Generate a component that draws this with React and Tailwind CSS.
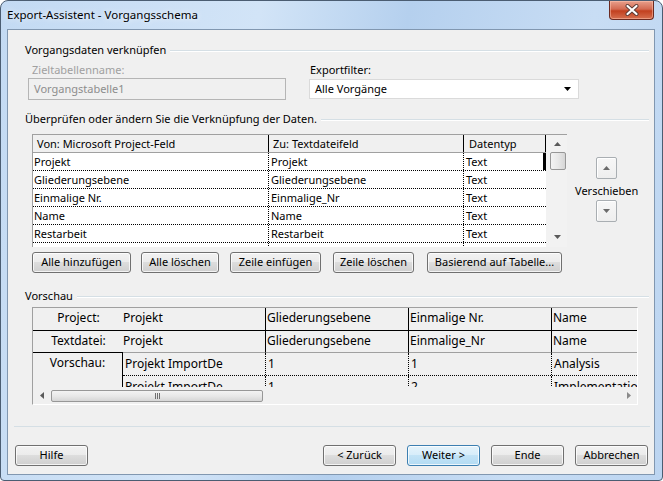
import clsx from "clsx";

const btnBase =
  "h-[21px] flex items-center justify-center rounded-[3px] border text-black shadow-[inset_0_0_0_1px_rgba(255,255,255,0.75)]";
const btnNormal =
  "border-[#707070] bg-[linear-gradient(#f2f2f2,#ebebeb_50%,#dddddd_50%,#cfcfcf)]";
const btnDefault =
  "border-[#3c7fb1] bg-[linear-gradient(#e5f3fb,#d6edfa_50%,#c2e3f6_50%,#b3dbf3)]";

const Btn = ({ className, def, children }) => (
  <div className={clsx(btnBase, def ? btnDefault : btnNormal, className)}>{children}</div>
);

const Heading = ({ children, className }) => (
  <div className={clsx("flex items-center h-[16px] pl-[17px] pr-[5px]", className)}>
    <span className="leading-[16px] whitespace-nowrap">{children}</span>
    <div className="flex-1 ml-[4px] mt-[2px] border-t border-[#d5dfe5] border-b border-b-white" />
  </div>
);

const TriUp = ({ color = "#5a5a5a" }) => (
  <svg width="7" height="4" viewBox="0 0 7 4">
    <path d="M0 4 L3.5 0 L7 4 Z" fill={color} />
  </svg>
);
const TriDown = ({ color = "#5a5a5a" }) => (
  <svg width="7" height="4" viewBox="0 0 7 4">
    <path d="M0 0 L7 0 L3.5 4 Z" fill={color} />
  </svg>
);
const TriLeft = () => (
  <svg width="4" height="7" viewBox="0 0 4 7">
    <path d="M4 0 L4 7 L0 3.5 Z" fill="#5a5a5a" />
  </svg>
);
const TriRight = () => (
  <svg width="4" height="7" viewBox="0 0 4 7">
    <path d="M0 0 L4 3.5 L0 7 Z" fill="#8a8a8a" />
  </svg>
);

const mapRows = [
  ["Projekt", "Projekt"],
  ["Gliederungsebene", "Gliederungsebene"],
  ["Einmalige Nr.", "Einmalige_Nr"],
  ["Name", "Name"],
  ["Restarbeit", "Restarbeit"],
  ["", ""],
];

const MappingGrid = () => (
  <div className="w-[535px] h-[113px] border-l border-t border-[#a0a0a0] bg-white flex overflow-hidden">
    <div className="w-[513px] flex flex-col">
      <div className="h-[18px] flex bg-[#f0f0f0] border-b border-[#a0a0a0] leading-[17px]">
        <div className="w-[236px] border-r border-black pl-[4px]">Von: Microsoft Project-Feld</div>
        <div className="w-[195px] border-r border-black pl-[4px]">Zu: Textdateifeld</div>
        <div className="w-[82px] border-r border-black pl-[5px]">Datentyp</div>
      </div>
      {mapRows.map((r, i) => (
        <div key={i} className="h-[18px] shrink-0 flex border-b border-dotted border-black leading-[17px]">
          <div className="w-[236px] border-r border-dotted border-black pl-[1px]">{r[0]}</div>
          <div className="w-[195px] border-r border-dotted border-black pl-[2px]">{r[1]}</div>
          <div className={clsx("w-[82px] pl-[2px]", i === 0 && "border-r-[3px] border-black")}>
            {r[0] ? "Text" : ""}
          </div>
        </div>
      ))}
    </div>
    <div className="w-[21px] bg-[#f2f2f2] flex flex-col items-center">
      <div className="h-[17px] flex items-center justify-center pl-[2px]">
        <TriUp />
      </div>
      <div className="w-[16px] h-[18px] ml-[3px] rounded-[2px] border border-[#979797] bg-[linear-gradient(to_right,#f3f3f3,#e8e8e8_50%,#d6d6d6)]" />
      <div className="flex-1" />
      <div className="h-[17px] flex items-start pt-[5px] justify-center pl-[2px]">
        <TriDown />
      </div>
    </div>
  </div>
);

const SmallBtn = ({ children }) => (
  <div className="w-[21px] h-[22px] rounded-[2px] border border-[#a9aeb2] bg-[linear-gradient(#f7f7f7,#eeeeee)] shadow-[inset_1px_1px_0_#ffffff] flex items-center justify-center">
    {children}
  </div>
);

const colW = "w-[143px] shrink-0 whitespace-nowrap overflow-hidden";

const Preview = () => (
  <div className="w-[606px] h-[98px] text-[12px] border-t border-l border-[#a0a0a0] border-r border-b border-r-white border-b-white bg-[#f0f0f0] flex flex-col overflow-hidden">
    <div className="h-[23px] flex border-b border-black leading-[20px] shrink-0">
      <div className="w-[90px] shrink-0 text-center pl-[1px]">Project:</div>
      <div className={clsx(colW, "border-r border-black")}>Projekt</div>
      <div className={clsx(colW, "border-r border-black pl-[1px]")}>Gliederungsebene</div>
      <div className={clsx(colW, "border-r border-black pl-[1px]")}>Einmalige Nr.</div>
      <div className="flex-1 whitespace-nowrap overflow-hidden pl-[1px]">Name</div>
    </div>
    <div className="h-[22px] flex leading-[20px] shrink-0">
      <div className="w-[90px] shrink-0 text-center border-b border-black pl-[1px]">Textdatei:</div>
      <div className={clsx(colW, "border-r border-black border-b border-b-[#a0a0a0]")}>Projekt</div>
      <div className={clsx(colW, "border-r border-black border-b border-b-[#a0a0a0] pl-[1px]")}>Gliederungsebene</div>
      <div className={clsx(colW, "border-r border-black border-b border-b-[#a0a0a0] pl-[1px]")}>Einmalige_Nr</div>
      <div className="flex-1 whitespace-nowrap overflow-hidden border-b border-[#a0a0a0] pl-[1px]">Name</div>
    </div>
    <div className="h-[34px] flex shrink-0 overflow-hidden">
      <div className="w-[90px] shrink-0 border-r border-black text-center pt-[1px] leading-[18px]">Vorschau:</div>
      <div className="flex-1 flex flex-col overflow-hidden">
        {[
          ["Projekt ImportDe", "1", "1", "Analysis"],
          ["Projekt ImportDe", "1", "2", "Implementation"],
        ].map((r, i) => (
          <div key={i} className="h-[23px] shrink-0 flex border-b border-dotted border-black leading-[22px]">
            <div className="w-[143px] shrink-0 border-r border-dotted border-black pl-[2px] whitespace-nowrap overflow-hidden">{r[0]}</div>
            <div className="w-[143px] shrink-0 border-r border-dotted border-black pl-[2px]">{r[1]}</div>
            <div className="w-[143px] shrink-0 border-r border-dotted border-black pl-[2px]">{r[2]}</div>
            <div className="flex-1 pl-[2px] whitespace-nowrap overflow-hidden">{r[3]}</div>
          </div>
        ))}
      </div>
    </div>
    <div className="h-[17px] shrink-0 flex items-center bg-[#f0f0f0]">
      <div className="w-[17px] flex justify-center">
        <TriLeft />
      </div>
      <div className="w-[212px] h-[12px] ml-[1px] rounded-[2px] border border-[#979797] bg-[linear-gradient(#f3f3f3,#e8e8e8_50%,#d6d6d6)] flex items-center justify-center gap-[1px]">
        <div className="w-[1px] h-[6px] bg-[#6f6f6f]" />
        <div className="w-[1px] h-[6px] bg-[#6f6f6f]" />
        <div className="w-[1px] h-[6px] bg-[#6f6f6f]" />
      </div>
      <div className="flex-1" />
      <div className="w-[17px] flex justify-center">
        <TriRight />
      </div>
    </div>
  </div>
);

const App = () => {
  return (
    <div className="w-[663px] h-[481px] font-['Noto_Sans',sans-serif] text-[11px] text-black">
      <div className="w-[663px] h-[481px] rounded-t-[8px] rounded-b-[4px] border border-[#4b5d72] bg-[linear-gradient(100deg,#c3daf3,#d2e4f7_35%,#b5d0ee_55%,#c8ddf4_80%,#bcd5f1)] flex flex-col pl-[6px] pr-[7px] pb-[5px]">
        {/* Title bar */}
        <div className="h-[28px] flex items-start justify-between shrink-0">
          <div className="mt-[6px] text-[11.5px] leading-[16px] [text-shadow:0_0_6px_#ffffff]">
            Export-Assistent - Vorgangsschema
          </div>
          <div className="w-[45px] h-[19px] mr-[1px] rounded-b-[4px] border border-t-0 border-[#6b2a20] bg-[linear-gradient(#e8a08c,#d36a52_45%,#c2401f_55%,#d66f4f)] shadow-[inset_0_0_0_1px_rgba(255,200,180,0.5)] flex items-center justify-center">
            <svg width="14" height="12" viewBox="0 0 14 12">
              <path d="M2.5 2 L11.5 10 M11.5 2 L2.5 10" stroke="#5a3a35" strokeWidth="4" strokeLinecap="round" />
              <path d="M2.5 2 L11.5 10 M11.5 2 L2.5 10" stroke="#ffffff" strokeWidth="2.2" strokeLinecap="round" />
            </svg>
          </div>
        </div>

        {/* Client area */}
        <div className="flex-1 border border-[#8197b0] bg-[#f0f0f0] flex flex-col">
          <Heading className="mt-[12px]">Vorgangsdaten verknüpfen</Heading>

          <div className="mt-[4px] flex">
            <div className="ml-[20px] w-[281px] flex flex-col">
              <div className="h-[16px] leading-[16px] pl-[4px] text-[#a0a0a0]">Zieltabellenname:</div>
              <div className="w-[258px] h-[22px] border border-[#b5b5b5] bg-[#f0f0f0] pl-[5px] leading-[20px] text-[#8d8d8d]">
                Vorgangstabelle1
              </div>
            </div>
            <div className="flex flex-col">
              <div className="h-[17px] leading-[16px] pl-[1px]">Exportfilter:</div>
              <div className="w-[270px] h-[20px] border border-[#dadada] bg-white flex items-center pl-[5px] pr-[7px]">
                <span className="flex-1">Alle Vorgänge</span>
                <TriDown color="#000000" />
              </div>
            </div>
          </div>

          <Heading className="mt-[11px]">Überprüfen oder ändern Sie die Verknüpfung der Daten.</Heading>

          <div className="mt-[7px] flex">
            <div className="ml-[24px]">
              <MappingGrid />
            </div>
            <div className="ml-[8px] flex flex-col">
              <div className="ml-[21px] mt-[23px]">
                <SmallBtn>
                  <TriUp color="#6b6b6b" />
                </SmallBtn>
              </div>
              <div className="h-[16px] leading-[16px] mt-[4px] whitespace-nowrap">Verschieben</div>
              <div className="ml-[21px] mt-[1px]">
                <SmallBtn>
                  <TriDown color="#6b6b6b" />
                </SmallBtn>
              </div>
            </div>
          </div>

          <div className="mt-[5px] ml-[24px] flex">
            <Btn className="w-[99px]">Alle hinzufügen</Btn>
            <Btn className="w-[78px] ml-[10px]">Alle löschen</Btn>
            <Btn className="w-[91px] ml-[11px]">Zeile einfügen</Btn>
            <Btn className="w-[81px] ml-[12px]">Zeile löschen</Btn>
            <Btn className="w-[135px] ml-[13px]">Basierend auf Tabelle...</Btn>
          </div>

          <Heading className="mt-[15px]">Vorschau</Heading>

          <div className="mt-[3px] ml-[24px]">
            <Preview />
          </div>

          <div className="mt-[21px] ml-[6px] mr-[4px] border-t border-[#d5dfe5]" />

          <div className="mt-[18px] flex ml-[7px] mr-[6px]">
            <Btn className="w-[73px]">Hilfe</Btn>
            <div className="ml-auto flex gap-[11px]">
              <Btn className="w-[73px]">&lt; Zurück</Btn>
              <Btn className="w-[73px]" def>
                Weiter &gt;
              </Btn>
              <Btn className="w-[73px]">Ende</Btn>
              <Btn className="w-[73px]">Abbrechen</Btn>
            </div>
          </div>
        </div>
      </div>
    </div>
  );
};

export default App;
